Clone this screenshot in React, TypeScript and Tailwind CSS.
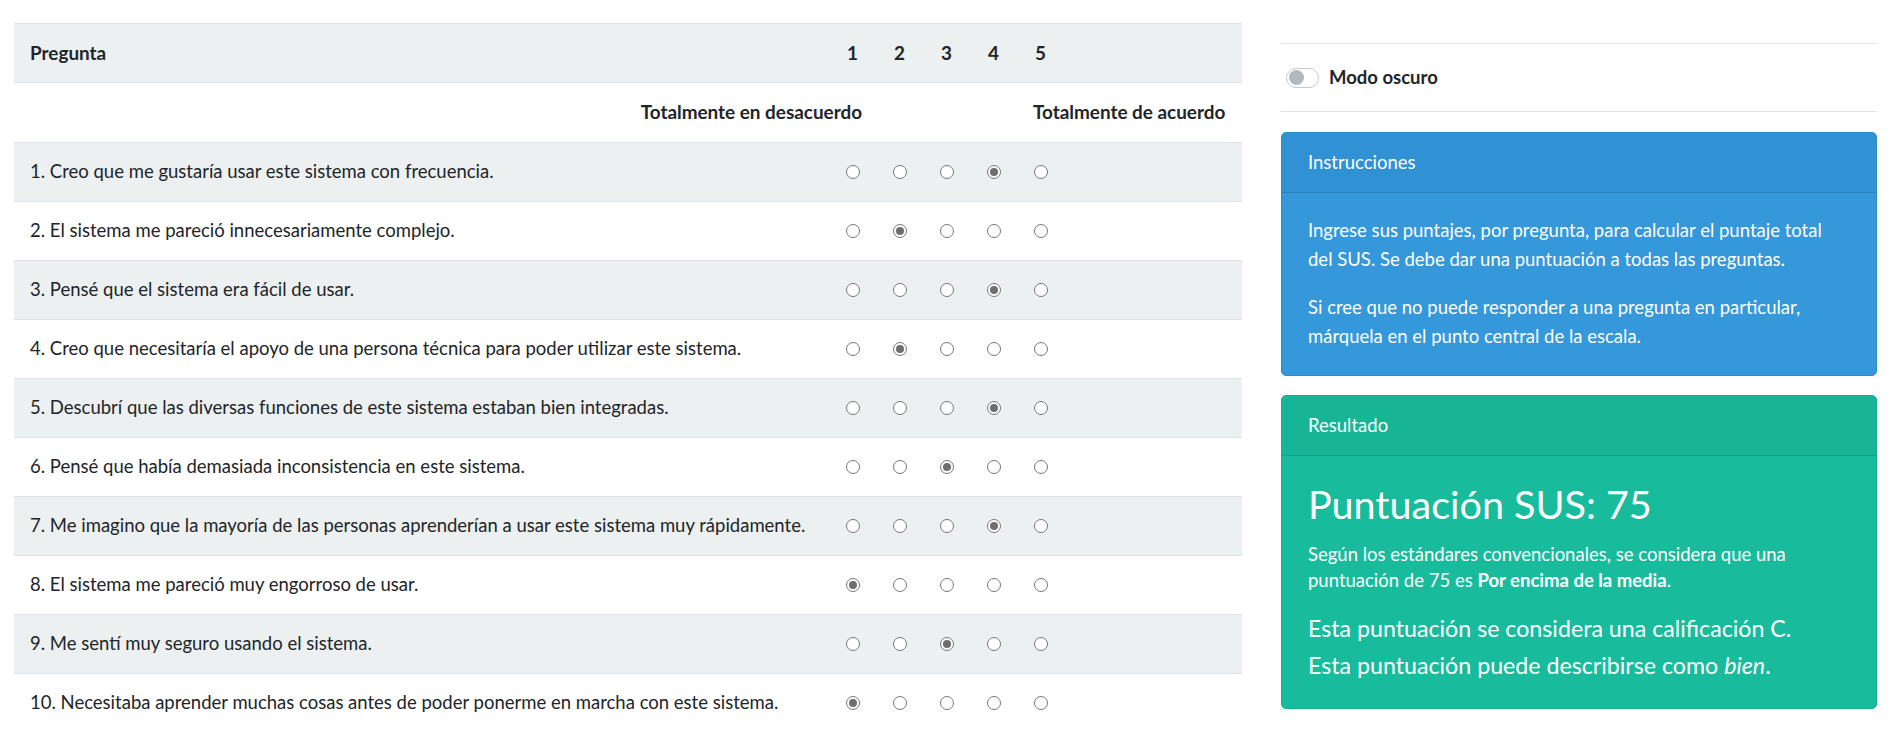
import React from "react";

// Preguntas del cuestionario SUS con la respuesta marcada (1..5)
const preguntas: { texto: string; valor: number }[] = [
  { texto: "1. Creo que me gustaría usar este sistema con frecuencia.", valor: 4 },
  { texto: "2. El sistema me pareció innecesariamente complejo.", valor: 2 },
  { texto: "3. Pensé que el sistema era fácil de usar.", valor: 4 },
  { texto: "4. Creo que necesitaría el apoyo de una persona técnica para poder utilizar este sistema.", valor: 2 },
  { texto: "5. Descubrí que las diversas funciones de este sistema estaban bien integradas.", valor: 4 },
  { texto: "6. Pensé que había demasiada inconsistencia en este sistema.", valor: 3 },
  { texto: "7. Me imagino que la mayoría de las personas aprenderían a usar este sistema muy rápidamente.", valor: 4 },
  { texto: "8. El sistema me pareció muy engorroso de usar.", valor: 1 },
  { texto: "9. Me sentí muy seguro usando el sistema.", valor: 3 },
  { texto: "10. Necesitaba aprender muchas cosas antes de poder ponerme en marcha con este sistema.", valor: 1 },
];

const escala = [1, 2, 3, 4, 5];

// Radio gris, estilo nativo deshabilitado
function Radio({ checked }: { checked: boolean }) {
  return (
    <span className="flex h-[14px] w-[14px] items-center justify-center rounded-full border border-[#767676] bg-white">
      {checked && <span className="h-[8px] w-[8px] rounded-full bg-[#6e6e6e]" />}
    </span>
  );
}

// pregunta | 1..5 | resto
const grid = "grid grid-cols-[820px_47px_47px_47px_47px_47px_1fr]";

export default function App() {
  return (
    <div className="flex min-h-screen bg-white pl-[14px] pt-[23px] font-['Lato','Open_Sans',sans-serif] text-[18.5px] text-[#212529]">
      {/* Tabla de preguntas */}
      <div className="w-[1228px] shrink-0">
        <div className={`${grid} h-[59px] items-center border-t border-[#dee2e6] bg-[#ecf0f1] text-[18.9px] font-bold`}>
          <div className="pl-[16px]">Pregunta</div>
          {escala.map((n) => (
            <div key={n} className="pl-[13px]">
              {n}
            </div>
          ))}
          <div />
        </div>

        <div className={`${grid} h-[60px] items-center border-t border-[#dee2e6] text-[18.9px] font-bold`}>
          <div className="col-span-2 pr-[19px] text-right">Totalmente en desacuerdo</div>
          <div />
          <div />
          <div />
          <div className="col-span-2 pl-[11px]">Totalmente de acuerdo</div>
        </div>

        {preguntas.map((p, i) => (
          <div
            key={p.texto}
            className={`${grid} h-[59px] items-center border-t border-[#dee2e6] ${i % 2 === 0 ? "bg-[#ecf0f1]" : "bg-white"}`}
          >
            <div className="pl-[16px]">{p.texto}</div>
            {escala.map((n) => (
              <div key={n} className="pl-[12px]">
                <Radio checked={p.valor === n} />
              </div>
            ))}
            <div />
          </div>
        ))}
      </div>

      {/* Columna derecha */}
      <div className="ml-[39px] w-[596px] shrink-0 pt-[20px]">
        <div className="flex h-[69px] items-center gap-[10px] border-y border-[#e2e2e2] pl-[5px] font-bold">
          <span className="flex h-[20px] w-[33px] items-center rounded-full border border-[#c5c9cd] px-[2px]">
            <span className="h-[15px] w-[15px] rounded-full bg-[#b3b9bf]" />
          </span>
          <span>Modo oscuro</span>
        </div>

        <div className="mt-[20px] overflow-hidden rounded-[5px] border border-[#2f8bcb] bg-[#3498db] text-white">
          <div className="flex h-[60px] items-center border-b border-[#2a7fbf] bg-[#3191d5] px-[26px] pt-[1px]">Instrucciones</div>
          <div className="flex flex-col gap-[19px] pb-[24px] pl-[26px] pr-[40px] pt-[23px] leading-[29px]">
            <p>Ingrese sus puntajes, por pregunta, para calcular el puntaje total del SUS. Se debe dar una puntuación a todas las preguntas.</p>
            <p>Si cree que no puede responder a una pregunta en particular, márquela en el punto central de la escala.</p>
          </div>
        </div>

        <div className="mt-[19px] overflow-hidden rounded-[5px] border border-[#17ad8f] bg-[#18bc9c] text-white">
          <div className="flex h-[60px] items-center border-b border-[#15a085] bg-[#17b595] px-[26px] pt-[1px]">Resultado</div>
          <div className="pb-[24px] pl-[26px] pr-[40px] pt-[24px]">
            <h1 className="text-[39.5px] leading-[47px]">Puntuación SUS: 75</h1>
            <p className="mt-[14px] leading-[26px]">
              Según los estándares convencionales, se considera que una puntuación de 75 es{" "}
              <strong className="font-bold">Por encima de la media</strong>.
            </p>
            <p className="mt-[17px] text-[23.2px] leading-[37px]">Esta puntuación se considera una calificación C.</p>
            <p className="text-[23.2px] leading-[37px]">
              Esta puntuación puede describirse como <em>bien</em>.
            </p>
          </div>
        </div>
      </div>
    </div>
  );
}
